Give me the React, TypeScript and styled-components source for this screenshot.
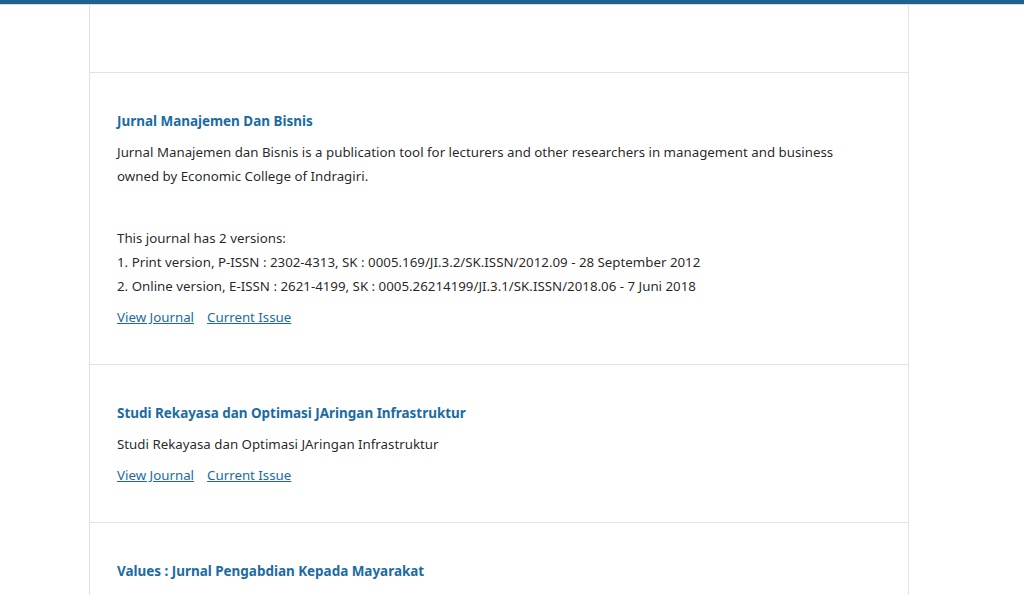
import React from 'react';
import styled, { createGlobalStyle } from 'styled-components';

const GlobalStyle = createGlobalStyle`
	html, body {
		margin: 0;
		padding: 0;
		background: #fff;
	}
	body {
		font-family: 'Noto Sans', 'Open Sans', sans-serif;
		font-size: 13.3px;
		line-height: 24px;
		color: rgba(0, 0, 0, 0.87);
	}
`;

type Journal = {
	title: string;
	description: string[];
	versions?: string[];
};

const journals: Journal[] = [
	{
		title: 'Jurnal Manajemen Dan Bisnis',
		description: [
			'Jurnal Manajemen dan Bisnis is a publication tool for lecturers and other researchers in management and business owned by Economic College of Indragiri.',
		],
		versions: [
			'This journal has 2 versions:',
			'1. Print version, P-ISSN : 2302-4313, SK : 0005.169/JI.3.2/SK.ISSN/2012.09 - 28 September 2012',
			'2. Online version, E-ISSN : 2621-4199, SK : 0005.26214199/JI.3.1/SK.ISSN/2018.06 - 7 Juni 2018',
		],
	},
	{
		title: 'Studi Rekayasa dan Optimasi JAringan Infrastruktur',
		description: ['Studi Rekayasa dan Optimasi JAringan Infrastruktur'],
	},
	{
		title: 'Values : Jurnal Pengabdian Kepada Mayarakat',
		description: ['Values : Jurnal Pengabdian Kepada Mayarakat'],
	},
];

const App = () => {
	return (
		<>
			<GlobalStyle />
			<TopBar />
			<Page>
				<TopSpace />
				<JournalList>
					{journals.map((journal) => (
						<JournalItem key={journal.title}>
							<Title href="#">{journal.title}</Title>
							{journal.description.map((line) => (
								<Description key={line}>{line}</Description>
							))}
							{journal.versions && (
								<Versions>
									{journal.versions.map((line) => (
										<div key={line}>{line}</div>
									))}
								</Versions>
							)}
							<Links>
								<LinkItem href="#">View Journal</LinkItem>
								<LinkItem href="#">Current Issue</LinkItem>
							</Links>
						</JournalItem>
					))}
				</JournalList>
			</Page>
		</>
	);
};

export default App;

const TopBar = styled.div`
	height: 4px;
	background: #1e6292;
	border-bottom: 1px solid #cfdbe6;
`;

const Page = styled.main`
	margin-left: 89px;
	width: 818px;
	border-left: 1px solid #e2e2e2;
	border-right: 1px solid #e2e2e2;
	height: 590px;
	overflow: hidden;
`;

const TopSpace = styled.div`
	height: 67px;
`;

const JournalList = styled.ul`
	list-style: none;
	margin: 0;
	padding: 0;
`;

const JournalItem = styled.li`
	border-top: 1px solid #e2e2e2;
	padding: 36px 60px 35px 27px;
`;

const Title = styled.a`
	display: block;
	font-size: 13.45px;
	font-weight: 700;
	color: #1b6ba3;
	text-decoration: none;
	line-height: 24px;
`;

const Description = styled.p`
	margin: 7px 0 0;
`;

const Versions = styled.div`
	margin-top: 38px;
`;

const Links = styled.div`
	display: flex;
	gap: 13px;
	margin-top: 7px;
`;

const LinkItem = styled.a`
	color: #1b6ba3;
	text-decoration: underline;
`;
